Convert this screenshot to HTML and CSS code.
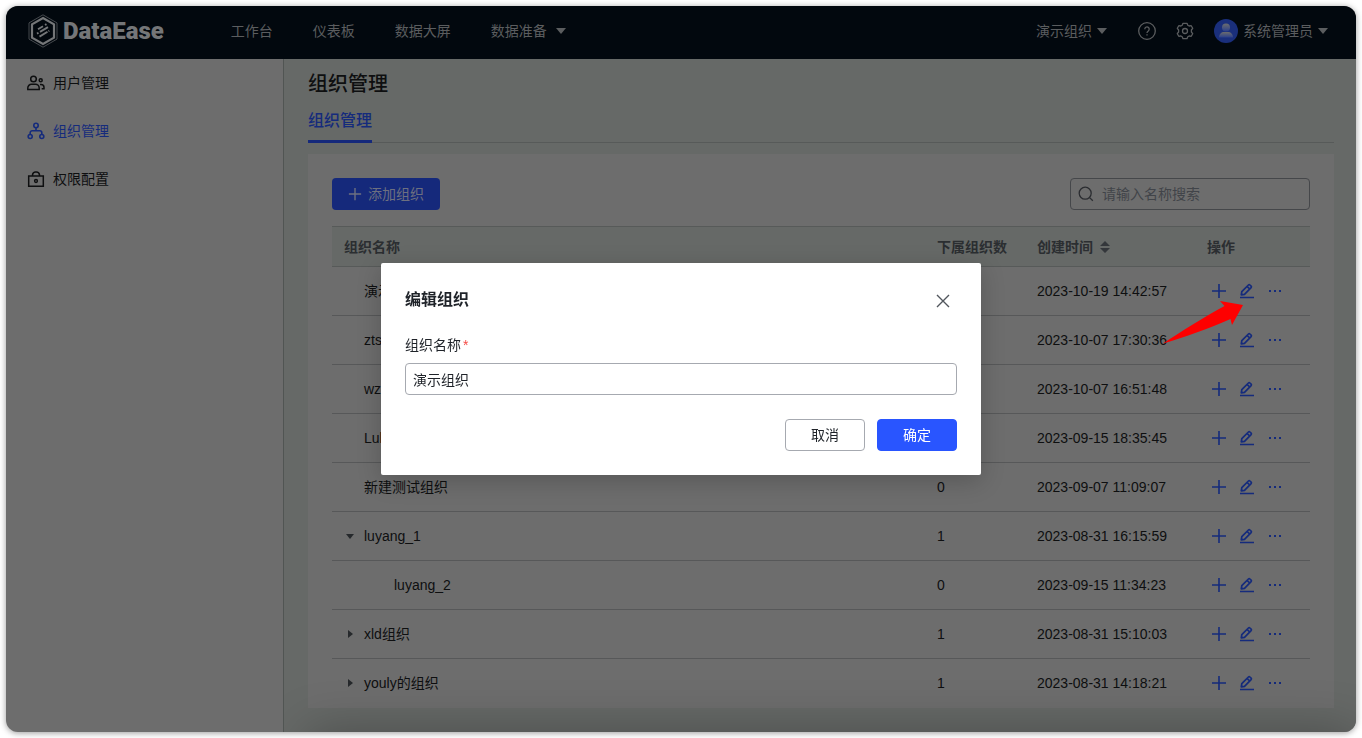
FILE: index.html
```html
<!DOCTYPE html>
<html lang="zh-CN">
<head>
<meta charset="utf-8">
<title>DataEase - 组织管理</title>
<link rel="stylesheet" href="styles.css">
</head>
<body>
<svg class="sprite" aria-hidden="true">
  <symbol id="i-plus" viewBox="0 0 16 16"><path d="M8 1v14M1 8h14" fill="none" stroke="currentColor" stroke-width="1.6"/></symbol>
  <symbol id="i-edit" viewBox="0 0 16 16"><path d="M1 14.500h14M2.800 8.600 9.400 2a1.100 1.100 0 0 1 1.500 0l1.200 1.200a1.100 1.100 0 0 1 0 1.500L5.500 11.300 2.300 11.900zM8.300 3.600l2.400 2.400" fill="none" stroke="currentColor" stroke-width="1.700" stroke-linejoin="round"/></symbol>
  <symbol id="i-more" viewBox="0 0 16 16"><path d="M2 7h2v2H2zM7 7h2v2H7zM12 7h2v2h-2z" fill="currentColor"/></symbol>
  <symbol id="i-down" viewBox="0 0 10 8"><path d="M0 1h10L5 7z" fill="currentColor"/></symbol>
</svg>
<div class="window">
  <header class="topbar">
    <a class="logo" href="#">
      <svg width="30" height="34" viewBox="0 0 30 34" fill="none" stroke="currentColor">
        <path d="M15 .8 29 8.900v16.200L15 33.200 1 25.100V8.900z" stroke-width=".6"/>
        <path d="M15 4 26 10.400v13.200L15 30 4 23.600V10.400z" stroke-width="2.200"/>
        <path d="M10 15.200l5-3M17 11l1.500-.9M9 19.600l1.500-.9M12 17.900l8-4.800M11.500 22.600l8-4.800M20.500 17.200l.8-.5" stroke-width="1.900"/>
      </svg>
      <span>DataEase</span>
    </a>
    <nav class="menu">
      <a href="#">工作台</a><a href="#">仪表板</a><a href="#">数据大屏</a>
      <a href="#">数据准备<svg width="10" height="8"><use href="#i-down"/></svg></a>
    </nav>
    <div class="tools">
      <button class="org">演示组织<svg width="10" height="8"><use href="#i-down"/></svg></button>
      <button aria-label="帮助"><svg width="18" height="18" viewBox="0 0 18 18" fill="none" stroke="currentColor" stroke-width="1.300"><circle cx="9" cy="9" r="8.300"/><path d="M6.800 7.200a2.200 2.200 0 1 1 3.500 1.700c-.8.600-1.300 1-1.300 2M9 12.200v1.400"/></svg></button>
      <button aria-label="设置"><svg width="18" height="18" viewBox="0 0 18 18" fill="none" stroke="currentColor" stroke-width="1.300" stroke-linejoin="round"><path d="M7 1.300h4l.8 2 1.300.700 2.100-.3 1.500 2.600L15.400 8v2l1.300 1.700-1.500 2.600-2.100-.3-1.300.700-.8 2H7l-.8-2-1.300-.7-2.100.3-1.500-2.600L2.600 10V8L1.300 6.300l1.500-2.600 2.100.3 1.300-.7z"/><circle cx="9" cy="9" r="2.500"/></svg></button>
      <button class="user"><svg width="24" height="24" viewBox="0 0 24 24"><defs><linearGradient id="g" x1="0" y1="0" x2="0" y2="1"><stop offset="0" stop-color="#6d6d6d"/><stop offset="1" stop-color="#2a3f8c"/></linearGradient></defs><circle cx="12" cy="12" r="12" fill="#1a2f7c"/><circle cx="12" cy="8.500" r="4" fill="url(#g)"/><path d="M5 18.500c0-3.500 2.500-5.500 5-5.500h4c2.500 0 5 2 5 5.500z" fill="url(#g)"/></svg>系统管理员<svg width="10" height="8"><use href="#i-down"/></svg></button>
    </div>
  </header>
  <div class="body">
    <nav class="sidebar">
      <a href="#"><svg width="18" height="18" viewBox="0 0 18 18" fill="none" stroke="currentColor" stroke-width="1.500"><circle cx="6.500" cy="5" r="2.800"/><path d="M.8 15.400v-1.400a3.700 3.700 0 0 1 3.700-3.700h4a3.700 3.700 0 0 1 3.700 3.700v1.400z"/><circle cx="13.700" cy="6.200" r="1.500"/><path d="M13 10.400h1a3 3 0 0 1 3 3v1.300h-2.300"/></svg>用户管理</a>
      <a href="#" class="active"><svg width="18" height="18" viewBox="0 0 18 18" fill="none" stroke="currentColor" stroke-width="1.600"><circle cx="9" cy="3.500" r="2.200"/><circle cx="3.200" cy="14.500" r="2"/><circle cx="14.800" cy="14.500" r="2"/><path d="M9 5.700v3M3.200 12.500v-1.800a2 2 0 0 1 2-2h7.600a2 2 0 0 1 2 2v1.800"/></svg>组织管理</a>
      <a href="#"><svg width="18" height="18" viewBox="0 0 18 18" fill="none" stroke="currentColor" stroke-width="1.500"><path d="M1.700 6h14.600v10.200H1.700zM5.500 6V4.800A3.300 3.300 0 0 1 9 1.900a3.300 3.300 0 0 1 3.500 2.900V6"/><circle cx="9" cy="11" r="1.400"/></svg>权限配置</a>
    </nav>
    <main class="content">
      <h1>组织管理</h1>
      <div class="tabs"><a href="#">组织管理</a></div>
      <section class="card">
        <div class="bar">
          <button class="add"><svg width="14" height="14"><use href="#i-plus"/></svg>添加组织</button>
          <label class="search"><svg width="16" height="16" viewBox="0 0 16 16" fill="none" stroke="currentColor" stroke-width="1.300"><circle cx="7.200" cy="7.200" r="6"/><path d="M11.600 11.600l3.200 3.200"/></svg><input type="search" aria-label="搜索" placeholder="请输入名称搜索"></label>
        </div>
        <table>
          <colgroup><col><col class="c-count"><col class="c-time"><col class="c-ops"></colgroup>
          <thead><tr><th>组织名称</th><th>下属组织数</th><th>创建时间<svg class="sort" width="10" height="12" viewBox="0 0 10 12"><path d="M0 5h10L5 0zM0 7h10l-5 5z" fill="currentColor"/></svg></th><th>操作</th></tr></thead>
          <tbody id="rows"></tbody>
        </table>
      </section>
    </main>
  </div>
</div>
<svg class="pointer" width="82" height="46" viewBox="0 0 82 46" aria-hidden="true"><path d="M81 5 58 1l4.500 5C42 17 20 31 1 43.500 24 37 45 29 68.500 19l1.500 6z" fill="#fe0000"/></svg>
<div class="overlay">
  <form class="dialog" role="dialog" aria-labelledby="dlg-title">
    <div class="dialog-head">
      <h2 id="dlg-title">编辑组织</h2>
      <button type="button" class="close" aria-label="关闭"><svg width="14" height="14" viewBox="0 0 14 14"><path d="M1 1l12 12M13 1 1 13" stroke="currentColor" stroke-width="1.400"/></svg></button>
    </div>
    <label class="field-label" for="org-name">组织名称<span>*</span></label>
    <input id="org-name" type="text" value="演示组织">
    <div class="dialog-foot">
      <button type="button">取消</button>
      <button type="button" class="primary">确定</button>
    </div>
  </form>
</div>
<script src="rows.js"></script>
</body>
</html>
```
FILE: styles.css
```css
* { box-sizing: border-box; }
body {
  margin: 0;
  padding: 6px;
  background: #fff;
  color: #0e0f10;
  font: 14px/22px "Liberation Sans", "Noto Sans CJK SC", sans-serif;
}
a { color: inherit; text-decoration: none; }
button, input { font: inherit; color: inherit; }
button { border: 0; padding: 0; background: none; }
h1, h2 { margin: 0; }
svg { flex: none; }
.sprite { position: absolute; width: 0; height: 0; }

.window {
  display: flex;
  flex-direction: column;
  min-height: calc(100vh - 12px);
  border-radius: 12px;
  overflow: hidden;
  background: #6d6d6d;
  box-shadow: 0 1px 6px rgba(0, 0, 0, .4);
}
.topbar {
  display: flex;
  align-items: center;
  height: 53px;
  padding: 0 28px 3px 22px;
  background: #02080e;
  color: #5b5d5f;
}
.logo { display: flex; align-items: center; gap: 5px; color: #747678; font: 900 24px/28px Roboto, sans-serif; }
.menu { display: flex; gap: 40px; margin-left: 67px; }
.menu a { display: flex; align-items: center; gap: 9px; }
.tools { display: flex; align-items: center; gap: 20px; margin-left: auto; }
.tools button { display: flex; align-items: center; gap: 5px; }
.tools .org { margin-right: 11px; }
.body { display: flex; flex: 1; }

.sidebar { width: 278px; border-right: 1px solid #515553; }
.sidebar a { display: flex; align-items: center; gap: 8px; height: 48px; padding-left: 21px; }
.sidebar .active { color: #152b7c; }

.content {
  position: relative;
  flex: 1;
  min-width: 0;
  overflow: hidden;
  padding: 11px 22px 24px 24px;
  background: #666967;
}
/* soft shade along the lower edge */
.content::after {
  content: "";
  position: absolute;
  top: 100%;
  left: 24px;
  right: 0;
  height: 100px;
  box-shadow: 0 0 50px rgba(0, 0, 0, .28);
  pointer-events: none;
}
h1 { font-size: 20px; font-weight: 500; line-height: 28px; }
.tabs { display: flex; height: 45px; border-bottom: 1px solid #575a59; }
.tabs a {
  height: 45px;
  padding-top: 11px;
  border-bottom: 3px solid #15297b;
  color: #152b7c;
  font-size: 16px;
  font-weight: 500;
  line-height: 24px;
}
.card { margin-top: 11px; padding: 24px 24px 0; background: #6d6d6d; }
.bar { display: flex; justify-content: space-between; margin-bottom: 16px; }
.add {
  display: flex;
  align-items: center;
  gap: 6px;
  height: 32px;
  padding: 0 16px;
  border-radius: 4px;
  background: #15297b;
  color: #6d7080;
}
.search {
  display: flex;
  align-items: center;
  gap: 8px;
  width: 240px;
  height: 32px;
  padding: 0 7px;
  border: 1px solid #45474a;
  border-radius: 4px;
  color: #2b2d31;
}
.search input { flex: 1; min-width: 0; padding: 0; border: 0; background: none; outline: 0; }
.search input::placeholder { color: #414449; opacity: 1; }

table { width: 100%; table-layout: fixed; border-collapse: separate; border-spacing: 0; }
.c-count { width: 100px; }
.c-time { width: 170px; }
.c-ops { width: 115px; }
th, td { padding: 0 0 0 12px; text-align: left; white-space: nowrap; }
th {
  height: 41px;
  border-top: 1px solid #575a59;
  border-bottom: 1px solid #575a59;
  background: #666967;
  color: #2b2e31;
  font-weight: 700;
}
.sort { margin-left: 7px; vertical-align: -1px; color: #34373b; }
td { height: 49px; border-bottom: 1px solid #575859; }
tr:last-child td { border-bottom-color: transparent; }
.name { display: flex; align-items: center; }
.name.child { padding-left: 30px; }
.toggle { display: flex; width: 20px; padding-left: 2px; color: #26292c; }
.ops { display: flex; gap: 12px; padding-left: 4px; color: #152b7c; }
.ops button { display: flex; }

.pointer { position: absolute; left: 1162px; top: 300px; }

.overlay {
  position: fixed;
  inset: 0;
  display: flex;
  align-items: center;
  justify-content: center;
}
.dialog {
  width: 600px;
  padding: 24px;
  border-radius: 2px;
  background: #fff;
  color: #1f2329;
  box-shadow: 0 6px 24px rgba(0, 0, 0, .2);
}
.dialog-head { display: flex; justify-content: space-between; height: 28px; margin-bottom: 20px; }
h2 { font-size: 16px; font-weight: 700; line-height: 26px; }
.close { display: flex; align-items: center; justify-content: center; width: 28px; color: #51565d; }
.field-label { display: block; margin-bottom: 8px; line-height: 20px; }
.field-label span { margin-left: 2px; color: #f54a45; }
.dialog input {
  display: block;
  width: 100%;
  height: 32px;
  padding: 0 7px;
  border: 1px solid #a6a9b0;
  border-radius: 4px;
  background: #fff;
}
.dialog-foot { display: flex; justify-content: flex-end; gap: 12px; margin-top: 24px; }
.dialog-foot button { width: 80px; height: 32px; border: 1px solid #a6a9b0; border-radius: 4px; }
.dialog-foot .primary { border-color: #2955ff; background: #2955ff; color: #fff; }
```
FILE: rows.js
```js
const orgs = [
  ["演示组织", 0, "2023-10-19 14:42:57"],
  ["zts", 0, "2023-10-07 17:30:36"],
  ["wz", 0, "2023-10-07 16:51:48"],
  ["Lul", 0, "2023-09-15 18:35:45"],
  ["新建测试组织", 0, "2023-09-07 11:09:07"],
  ["luyang_1", 1, "2023-08-31 16:15:59", "open"],
  ["luyang_2", 0, "2023-09-15 11:34:23", "child"],
  ["xld组织", 1, "2023-08-31 15:10:03", "closed"],
  ["youly的组织", 1, "2023-08-31 14:18:21", "closed"]
];
const arrows = { open: "M0 2h8L4 7z", closed: "M2 0v8l5-4z" };
const icon = (id, label) =>
  `<button aria-label="${label}"><svg width="16" height="16"><use href="#i-${id}"/></svg></button>`;
document.getElementById("rows").innerHTML = orgs.map(([name, count, time, state]) => {
  const arrow = arrows[state]
    ? `<svg width="8" height="8" viewBox="0 0 8 8"><path d="${arrows[state]}" fill="currentColor"/></svg>` : "";
  return `<tr>
    <td><div class="name ${state || ""}"><span class="toggle">${arrow}</span>${name}</div></td>
    <td>${count}</td><td>${time}</td>
    <td><div class="ops">${icon("plus", "添加")}${icon("edit", "编辑")}${icon("more", "更多")}</div></td>
  </tr>`;
}).join("");
```
